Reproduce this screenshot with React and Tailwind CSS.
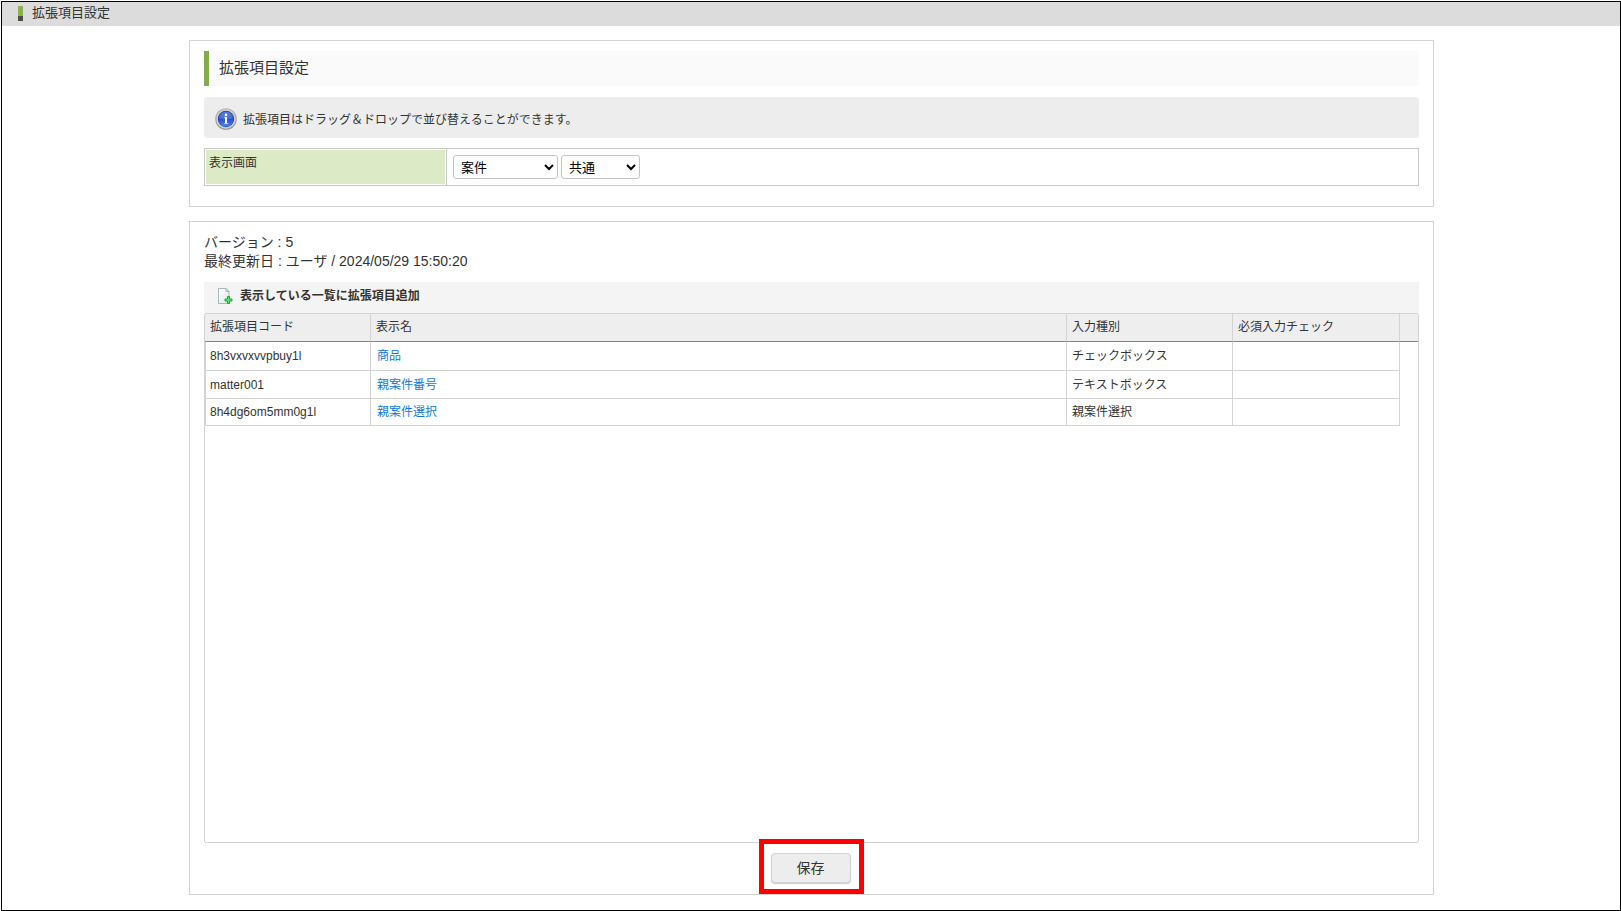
import React from 'react';

const rows = [
  { code: '8h3vxvxvvpbuy1l', name: '商品', type: 'チェックボックス' },
  { code: 'matter001', name: '親案件番号', type: 'テキストボックス' },
  { code: '8h4dg6om5mm0g1l', name: '親案件選択', type: '親案件選択' },
];

function InfoIcon() {
  return (
    <svg className="h-[22px] w-[22px] shrink-0" viewBox="0 0 22 22" aria-hidden="true">
      <defs>
        <linearGradient id="ring" x1="0" y1="0" x2="0" y2="1">
          <stop offset="0" stopColor="#b8b8b8" />
          <stop offset="1" stopColor="#949494" />
        </linearGradient>
        <linearGradient id="ball" x1="0" y1="0" x2="0" y2="1">
          <stop offset="0" stopColor="#3a68d4" />
          <stop offset="0.5" stopColor="#2450c4" />
          <stop offset="1" stopColor="#4f86ff" />
        </linearGradient>
      </defs>
      <circle cx="11" cy="11" r="10.8" fill="url(#ring)" />
      <circle cx="11" cy="11" r="9.7" fill="#d4d4d4" />
      <circle cx="11" cy="11" r="8.2" fill="#2444a4" />
      <circle cx="11" cy="11" r="7.5" fill="url(#ball)" />
      <path d="M4.2 10.2a6.8 6.3 0 0 1 13.6 0c-4 1.5-9.6 1.5-13.6 0z" fill="#fff" opacity="0.16" />
      <circle cx="11" cy="6.9" r="1.3" fill="#fff" />
      <path d="M9.5 9h2.5v6.500h-2v-5.500h-0.500z" fill="#fff" />
      <path d="M9 15h4v1H9z" fill="#fff" opacity="0.6" />
    </svg>
  );
}

function AddPageIcon() {
  return (
    <svg className="h-4 w-4 shrink-0" viewBox="0 0 16 16" aria-hidden="true">
      <defs>
        <linearGradient id="sheet" x1="0" y1="0" x2="1" y2="1">
          <stop offset="0" stopColor="#ffffff" />
          <stop offset="1" stopColor="#dde8ec" />
        </linearGradient>
      </defs>
      <path d="M1.500 0.500h7.500l3 3v12h-10.500z" fill="url(#sheet)" stroke="#a9b5b6" />
      <path d="M9 0.500v3h3z" fill="#f1f8f6" stroke="#a9b5b6" strokeLinejoin="round" />
      <path d="M10.500 8.500h2v2.500h2.500v2h-2.500v2.500h-2v-2.500h-2.500v-2h2.500z" fill="#5cec66" stroke="#1fa235" />
    </svg>
  );
}

export default function App() {
  return (
    <div className="flex min-h-screen flex-col bg-white pt-px pl-px font-['Liberation_Sans','Noto_Sans_CJK_JP',sans-serif] text-xs text-[#333]">
      <div className="flex flex-1 flex-col border border-black">
        <header className="flex h-6 items-center gap-[9px] bg-[#dcdcdc] pb-[2px] pl-4">
          <span className="h-[15px] w-[5px] border-b-5 border-[#4b4f42] bg-[#8bb04e]" />
          <span className="text-[13px] leading-5">拡張項目設定</span>
        </header>

        <main className="flex flex-1 flex-col gap-[14px] pt-[14px] pr-[186px] pb-[15px] pl-[187px]">
          <section className="border border-[#d3d3d3] px-[14px] pt-[10px] pb-5">
            <h1 className="flex h-[35px] items-center border-l-5 border-[#83ac4b] bg-[#fafafa] pb-px pl-[10px] text-[15px]">
              拡張項目設定
            </h1>
            <div className="mt-[11px] flex h-[41px] items-center gap-[6px] rounded-[3px] bg-[#ededed] px-[11px] pt-[2px]">
              <InfoIcon />
              <p className="pt-[2px]">拡張項目はドラッグ＆ドロップで並び替えることができます。</p>
            </div>
            <div className="mt-[10px] flex h-[38px] border border-[#c8c8c8]">
              <div className="w-[242px] shrink-0 border-r border-[#c8c8c8] p-px">
                <label htmlFor="screen" className="block h-full w-[239px] bg-[#dcebc6] px-[3px] pt-[5px] leading-4">
                  表示画面
                </label>
              </div>
              <div className="flex items-center gap-[3px] pl-[6px]">
                <select id="screen" defaultValue="案件" className="h-6 w-[105px] rounded-[3px] border border-[#c4c4c4] bg-white pl-[3px] text-[13px] text-black">
                  <option>案件</option>
                </select>
                <select aria-label="種別" defaultValue="共通" className="h-6 w-[79px] rounded-[3px] border border-[#c4c4c4] bg-white pl-[3px] text-[13px] text-black">
                  <option>共通</option>
                </select>
              </div>
            </div>
          </section>

          <section className="flex flex-1 flex-col border border-[#d3d3d3] px-[14px] pt-[11px]">
            <div className="text-sm leading-[19px]">
              <p>バージョン : 5</p>
              <p>最終更新日 : ユーザ / 2024/05/29 15:50:20</p>
            </div>
            <div className="mt-[11px] flex h-[31px] items-center bg-[#f4f4f4] pb-[3px] pl-[13px]">
              <button type="button" className="flex items-center gap-[7px] font-bold">
                <AddPageIcon />
                表示している一覧に拡張項目追加
              </button>
            </div>
            <div className="flex-1 rounded-[2px] border border-[#d3d3d3]">
              <table className="w-full table-fixed border-separate border-spacing-0 text-left">
                <colgroup>
                  <col className="w-[166px]" />
                  <col />
                  <col className="w-[166px]" />
                  <col className="w-[167px]" />
                  <col className="w-[18px]" />
                </colgroup>
                <thead>
                  <tr className="h-7 bg-[#eee]">
                    <th className="border-r border-b border-r-[#d3d3d3] border-b-[#759c42] px-[5px] pb-[2px] font-normal">拡張項目コード</th>
                    <th className="border-r border-b border-r-[#d3d3d3] border-b-[#759c42] px-[5px] pb-[2px] font-normal">表示名</th>
                    <th className="border-r border-b border-r-[#d3d3d3] border-b-[#759c42] px-[5px] pb-[2px] font-normal">入力種別</th>
                    <th className="border-r border-b border-r-[#d3d3d3] border-b-[#759c42] px-[5px] pb-[2px] font-normal">必須入力チェック</th>
                    <td className="border-b border-[#759c42]" />
                  </tr>
                </thead>
                <tbody>
                  {rows.map((r) => (
                    <tr key={r.code} className="h-7 first:h-[29px] last:h-[27px]">
                      <td className="border-r border-b border-l border-[#d3d3d3] px-1">{r.code}</td>
                      <td className="border-r border-b border-[#d3d3d3] px-[6px]">
                        <a href="#edit" className="text-[#0f7ad8]">{r.name}</a>
                      </td>
                      <td className="border-r border-b border-[#d3d3d3] px-[5px]">{r.type}</td>
                      <td className="border-r border-b border-[#d3d3d3]" />
                    </tr>
                  ))}
                </tbody>
              </table>
            </div>
            <div className="flex justify-center pt-[10px] pr-[2px] pb-[11px]">
              <div className="relative">
                <button type="button" className="h-[30px] w-20 rounded-[4px] border border-[#d3d3d3] bg-[#ededed] text-sm shadow-[0_1px_1px_#ccc]">
                  保存
                </button>
                <div className="pointer-events-none absolute -top-[14px] -right-[13px] -bottom-[11px] -left-3 border-5 border-[#f00]" />
              </div>
            </div>
          </section>
        </main>
      </div>
    </div>
  );
}
